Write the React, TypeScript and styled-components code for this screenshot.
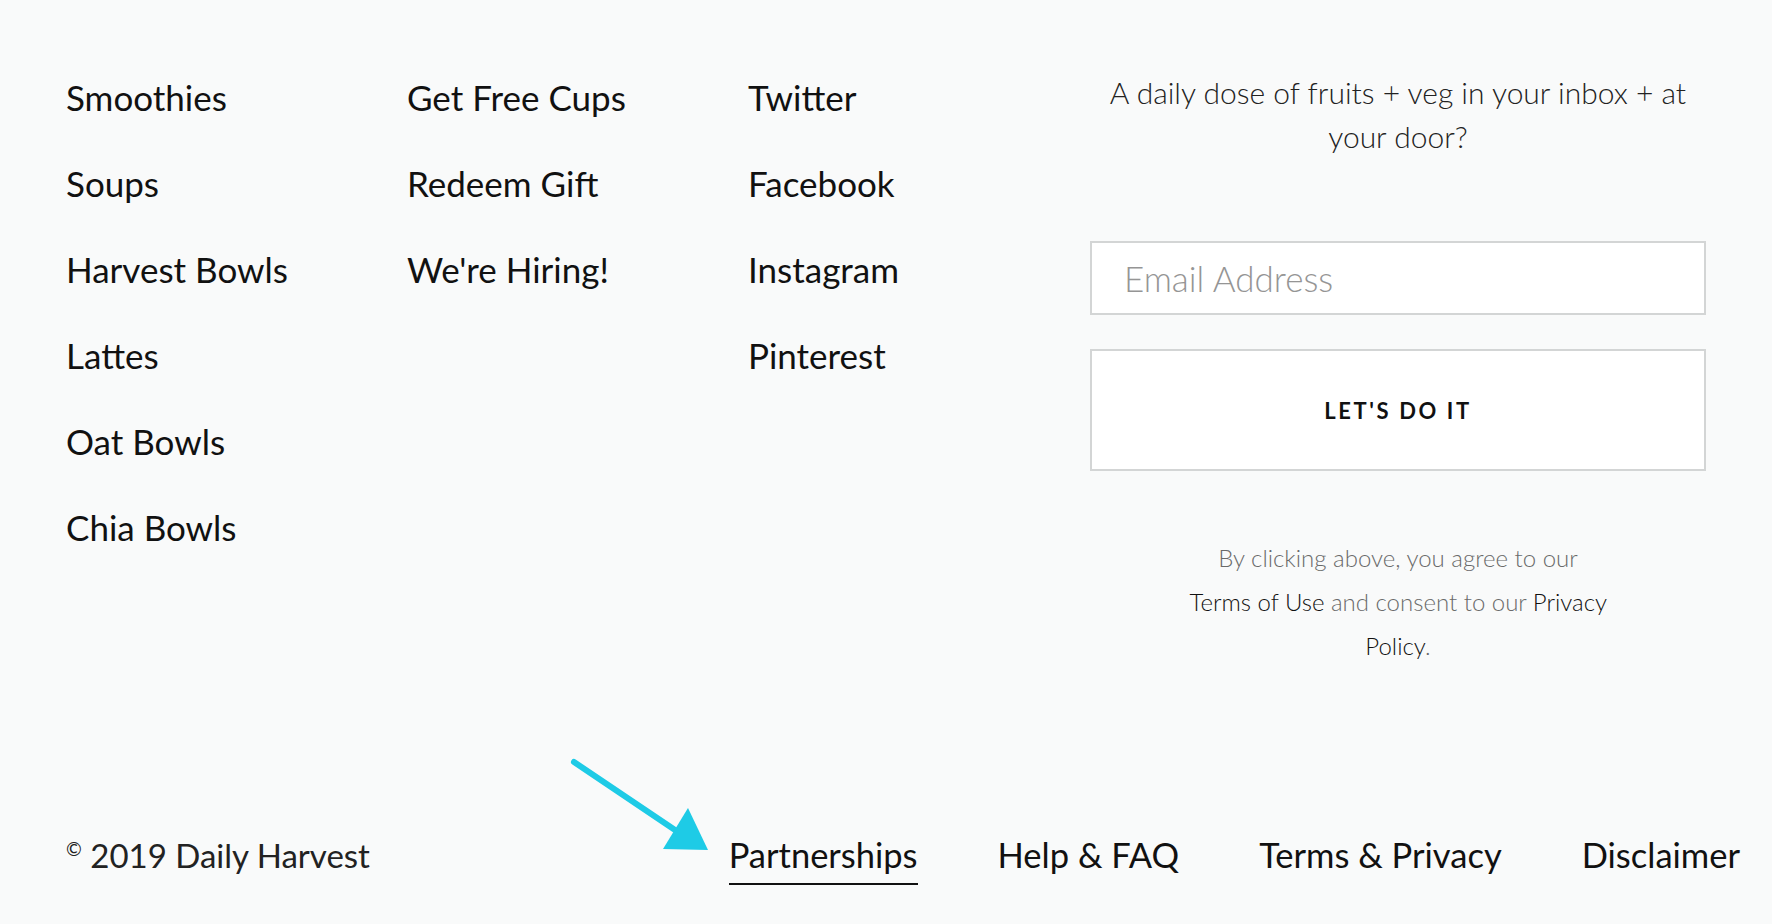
import React from 'react';
import styled, { createGlobalStyle } from 'styled-components';

const GlobalStyle = createGlobalStyle`
  html, body {
    margin: 0;
    padding: 0;
    background: #f9fafa;
  }
  body {
    font-family: Lato, "Liberation Sans", Arial, sans-serif;
    color: #111;
  }
`;

const shopLinks = ['Smoothies', 'Soups', 'Harvest Bowls', 'Lattes', 'Oat Bowls', 'Chia Bowls'];
const companyLinks = ['Get Free Cups', 'Redeem Gift', "We're Hiring!"];
const socialLinks = ['Twitter', 'Facebook', 'Instagram', 'Pinterest'];
const legalLinks = ['Partnerships', 'Help & FAQ', 'Terms & Privacy', 'Disclaimer'];

const App: React.FunctionComponent = () => {
  return (
    <Page>
      <GlobalStyle />
      <Top>
        <LinkColumn>
          {shopLinks.map(label => (
            <NavLink key={label} href="#">{label}</NavLink>
          ))}
        </LinkColumn>
        <LinkColumn>
          {companyLinks.map(label => (
            <NavLink key={label} href="#">{label}</NavLink>
          ))}
        </LinkColumn>
        <LinkColumn>
          {socialLinks.map(label => (
            <NavLink key={label} href="#">{label}</NavLink>
          ))}
        </LinkColumn>
        <Signup>
          <Pitch>A daily dose of fruits + veg in your inbox + at your door?</Pitch>
          <EmailInput type="email" placeholder="Email Address" />
          <SubmitButton type="button">LET'S DO IT</SubmitButton>
          <Agreement>
            By clicking above, you agree to our <InlineLink href="#">Terms of Use</InlineLink> and
            consent to our <InlineLink href="#">Privacy</InlineLink>{' '}
            <InlineLink href="#">Policy</InlineLink>.
          </Agreement>
        </Signup>
      </Top>
      <Bottom>
        <Copyright>
          <Sup>©</Sup> 2019 Daily Harvest
        </Copyright>
        <LegalNav>
          {legalLinks.map((label, i) => (
            <LegalLink key={label} href="#" $active={i === 0}>{label}</LegalLink>
          ))}
        </LegalNav>
      </Bottom>
      <Arrow width="150" height="100" viewBox="0 0 150 100">
        <line x1="8" y1="6" x2="112" y2="76" stroke="#1ecbe6" strokeWidth="6" strokeLinecap="round" />
        <polygon points="122,52 142,94 97,93" fill="#1ecbe6" />
      </Arrow>
    </Page>
  );
};

const Page = styled.div`
  position: relative;
  box-sizing: border-box;
  height: 924px;
  padding: 70px 32px 0 66px;
  display: flex;
  flex-direction: column;
  overflow: hidden;
`;

const Top = styled.div`
  display: grid;
  grid-template-columns: 341px 341px 342px 616px;
`;

const LinkColumn = styled.div`
  display: flex;
  flex-direction: column;
  gap: 46px;
  padding-top: 7px;
`;

const NavLink = styled.a`
  font-size: 35px;
  line-height: 40px;
  color: #111;
  text-decoration: none;
  white-space: nowrap;
`;

const Signup = styled.div`
  display: flex;
  flex-direction: column;
  align-items: stretch;
`;

const Pitch = styled.p`
  margin: 0;
  font-size: 30px;
  font-weight: 300;
  line-height: 44px;
  color: #222;
  text-align: center;
  padding: 0 4px;
`;

const EmailInput = styled.input`
  box-sizing: border-box;
  margin-top: 83px;
  height: 74px;
  width: 100%;
  padding: 0 32px;
  border: 2px solid #d3d5d5;
  border-radius: 0;
  background: #fff;
  font-family: inherit;
  font-size: 35px;
  font-weight: 300;
  color: #222;
  outline: none;
  &::placeholder {
    color: #959595;
  }
`;

const SubmitButton = styled.button`
  box-sizing: border-box;
  margin-top: 34px;
  height: 122px;
  width: 100%;
  border: 2px solid #d3d5d5;
  border-radius: 0;
  background: #fff;
  font-family: inherit;
  font-size: 22px;
  font-weight: 700;
  letter-spacing: 2.6px;
  color: #111;
  cursor: pointer;
`;

const Agreement = styled.p`
  align-self: center;
  max-width: 450px;
  margin: 65px 0 0;
  font-size: 24px;
  font-weight: 300;
  line-height: 44px;
  color: #6a6a6a;
  text-align: center;
`;

const InlineLink = styled.a`
  color: #111;
  text-decoration: none;
  white-space: nowrap;
`;

const Bottom = styled.div`
  margin-top: auto;
  margin-bottom: 39px;
  display: flex;
  align-items: flex-start;
  justify-content: space-between;
`;

const Copyright = styled.div`
  font-size: 33px;
  line-height: 40px;
  color: #222;
  white-space: nowrap;
`;

const Sup = styled.span`
  font-size: 19px;
  line-height: 0;
  vertical-align: 12px;
`;

const LegalNav = styled.nav`
  display: flex;
  gap: 80px;
`;

const LegalLink = styled.a<{ $active?: boolean }>`
  font-size: 34.5px;
  line-height: 40px;
  padding-bottom: 8px;
  color: #111;
  text-decoration: none;
  border-bottom: 2px solid ${p => (p.$active ? '#111' : 'transparent')};
`;

const Arrow = styled.svg`
  position: absolute;
  left: 566px;
  top: 756px;
  pointer-events: none;
`;

export default App;
